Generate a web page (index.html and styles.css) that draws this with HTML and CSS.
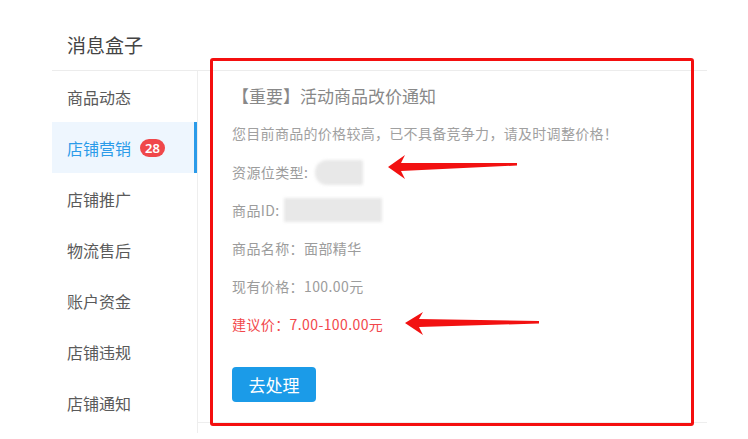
FILE: index.html
```html
<!DOCTYPE html>
<html lang="zh-CN">
<head>
<meta charset="utf-8">
<title>消息盒子</title>
<link rel="stylesheet" href="styles.css">
</head>
<body>
<div class="page">
  <div class="header">消息盒子</div>
  <div class="layout">
    <nav class="sidebar">
      <div class="nav-item">商品动态</div>
      <div class="nav-item active">店铺营销<span class="badge">28</span></div>
      <div class="nav-item">店铺推广</div>
      <div class="nav-item">物流售后</div>
      <div class="nav-item">账户资金</div>
      <div class="nav-item">店铺违规</div>
      <div class="nav-item">店铺通知</div>
    </nav>
    <main class="main">
      <div class="msg-title">【重要】活动商品改价通知</div>
      <div class="msg-desc">您目前商品的价格较高，已不具备竞争力，请及时调整价格！</div>
      <div class="field">资源位类型:<span class="blur pill"></span></div>
      <div class="field">商品ID:<span class="blur bar"></span></div>
      <div class="field">商品名称：面部精华</div>
      <div class="field">现有价格：100.00元</div>
      <div class="field suggest">建议价：7.00-100.00元</div>
      <button class="btn">去处理</button>
    </main>
  </div>
</div>
<div class="annot-box"></div>
<svg class="annot-arrows" width="748" height="439" viewBox="0 0 748 439" xmlns="http://www.w3.org/2000/svg">
  <polygon fill="#f21111" points="388,167 405,155 401,163 517,163 517,165.5 401,171 405,179"/>
  <polygon fill="#f21111" points="405,323 423,312 419,319 539,321 539,323.5 419,327 423,335"/>
</svg>
</body>
</html>
```

FILE: styles.css
```css
html, body {
  margin: 0;
  padding: 0;
  background: #fff;
}
body {
  font-family: "Noto Sans CJK SC", "Noto Sans", "Liberation Sans", sans-serif;
  width: 748px;
  height: 439px;
  overflow: hidden;
  position: relative;
}
.page {
  margin-left: 52px;
  width: 655px;
}
.header {
  box-sizing: border-box;
  height: 71px;
  padding: 30px 0 0 15px;
  font-size: 19px;
  line-height: 30px;
  color: #444;
  border-bottom: 1px solid #ececec;
}
.layout {
  display: flex;
}
.sidebar {
  width: 145px;
  flex-shrink: 0;
  border-right: 1px solid #eeeeee;
  height: 362px;
}
.nav-item {
  height: 51px;
  display: flex;
  align-items: center;
  padding-left: 15px;
  font-size: 16px;
  color: #5a5a5a;
}
.nav-item.active {
  background: #eef6fe;
  color: #2b9be9;
  box-shadow: inset -3px 0 0 #2b9be9;
}
.badge {
  display: inline-block;
  margin-left: 9px;
  width: 25px;
  height: 18px;
  border-radius: 9px;
  background: #f0474a;
  color: #fff;
  font-size: 13px;
  font-weight: 600;
  line-height: 18px;
  text-align: center;
  font-family: "Noto Sans", "Liberation Sans", sans-serif;
}
.main {
  flex: 1;
  box-sizing: border-box;
  height: 352px;
  padding: 13px 0 0 34px;
  border-bottom: 1px solid #eeeeee;
}
.msg-title {
  font-size: 17px;
  line-height: 24px;
  color: #888;
}
.msg-desc {
  margin-top: 13px;
  font-size: 14px;
  line-height: 24px;
  letter-spacing: 0.3px;
  color: #a0a0a0;
}
.msg-desc + .field {
  margin-top: 8px;
}
.field {
  display: flex;
  align-items: center;
  height: 38px;
  font-size: 14px;
  letter-spacing: 0.4px;
  color: #9c9c9c;
}
.field.suggest {
  color: #f2474b;
}
.blur {
  display: inline-block;
  background: #e8e8e8;
  filter: blur(1.5px);
}
.pill {
  margin-left: 7px;
  width: 48px;
  height: 25px;
  border-radius: 12px 2px 2px 12px;
}
.bar {
  margin-left: 4px;
  width: 98px;
  height: 24px;
}
.btn {
  display: block;
  margin-top: 24px;
  width: 84px;
  height: 35px;
  border: none;
  border-radius: 4px;
  background: #1b9be8;
  color: #fff;
  font-family: inherit;
  font-size: 17px;
  padding: 0;
}
.annot-box {
  position: absolute;
  left: 210px;
  top: 58px;
  width: 478px;
  height: 362px;
  border: 3px solid #f40f0f;
  border-radius: 3px;
}
.annot-arrows {
  position: absolute;
  left: 0;
  top: 0;
}
```
